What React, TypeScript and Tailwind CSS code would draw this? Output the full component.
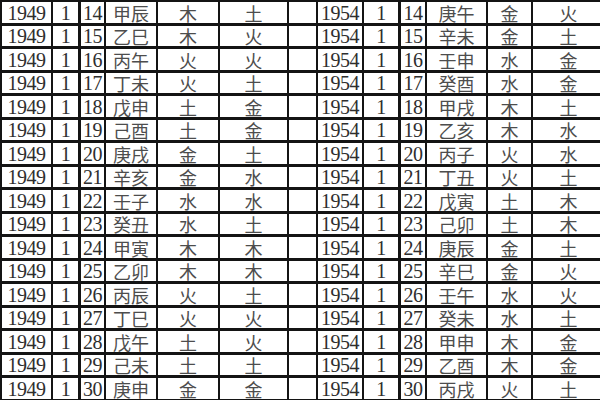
import React from "react";

type Row = [string, string, string, string];

// day, ganzhi, element A, element B
const left: Row[] = [
  ["14", "甲辰", "木", "土"],
  ["15", "乙巳", "木", "火"],
  ["16", "丙午", "火", "火"],
  ["17", "丁未", "火", "土"],
  ["18", "戊申", "土", "金"],
  ["19", "己酉", "土", "金"],
  ["20", "庚戌", "金", "土"],
  ["21", "辛亥", "金", "水"],
  ["22", "壬子", "水", "水"],
  ["23", "癸丑", "水", "土"],
  ["24", "甲寅", "木", "木"],
  ["25", "乙卯", "木", "木"],
  ["26", "丙辰", "火", "土"],
  ["27", "丁巳", "火", "火"],
  ["28", "戊午", "土", "火"],
  ["29", "己未", "土", "土"],
  ["30", "庚申", "金", "金"],
];

const right: Row[] = [
  ["14", "庚午", "金", "火"],
  ["15", "辛未", "金", "土"],
  ["16", "壬申", "水", "金"],
  ["17", "癸酉", "水", "金"],
  ["18", "甲戌", "木", "土"],
  ["19", "乙亥", "木", "水"],
  ["20", "丙子", "火", "水"],
  ["21", "丁丑", "火", "土"],
  ["22", "戊寅", "土", "木"],
  ["23", "己卯", "土", "木"],
  ["24", "庚辰", "金", "土"],
  ["25", "辛巳", "金", "火"],
  ["26", "壬午", "水", "火"],
  ["27", "癸未", "水", "土"],
  ["28", "甲申", "木", "金"],
  ["29", "乙酉", "木", "金"],
  ["30", "丙戌", "火", "土"],
];

const cell =
  "flex items-center justify-center border-r-2 border-b-[3px] border-[#141414] whitespace-nowrap leading-none pt-px";
const num = "font-['Liberation_Serif',serif] text-[20px] text-[#2e2e2e] tracking-[-0.5px]";
const han = "font-['Noto_Sans_CJK_TC',sans-serif] text-[18px] text-[#4d4d4d]";

function Half({ year, row }: { year: string; row: Row }) {
  return (
    <>
      <div className={`${cell} ${num}`}>{year}</div>
      <div className={`${cell} ${num}`}>1</div>
      <div className={`${cell} ${num} border-l border-l-[#141414]`}>{row[0]}</div>
      <div className={`${cell} ${han}`}>{row[1]}</div>
      <div className={`${cell} ${han}`}>{row[2]}</div>
      <div className={`${cell} ${han}`}>{row[3]}</div>
    </>
  );
}

export default function App() {
  return (
    <div className="w-[600px] h-[400px] overflow-hidden bg-white">
      <div className="w-[604px] grid grid-cols-[51px_27px_26px_52px_62px_69px_29px_46px_36px_27px_61px_45px_73px] auto-rows-[23.5px] border-t-2 border-l-2 border-[#141414]">
        {left.map((l, i) => (
          <React.Fragment key={l[0]}>
            <Half year="1949" row={l} />
            <div className={cell} />
            <Half year="1954" row={right[i]} />
          </React.Fragment>
        ))}
      </div>
    </div>
  );
}
